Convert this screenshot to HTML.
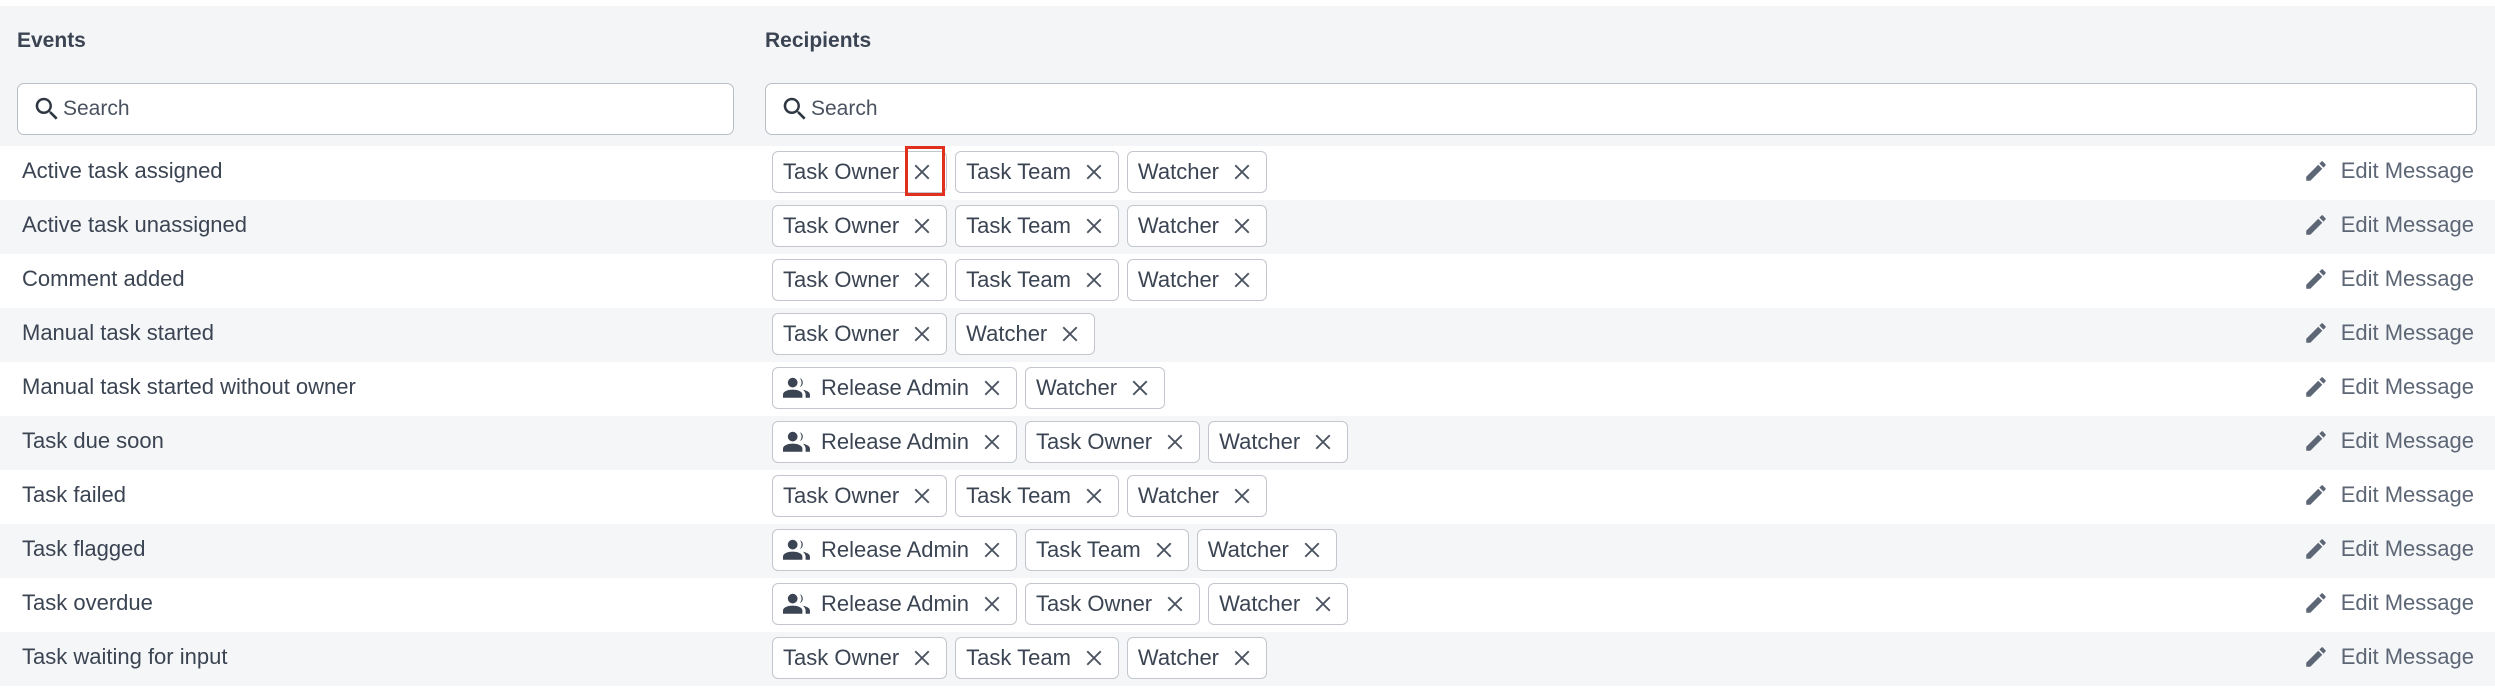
<!DOCTYPE html>
<html><head><meta charset="utf-8">
<style>
*{box-sizing:border-box;margin:0;padding:0}
body{width:2495px;height:690px;background:#fff;font-family:"Liberation Sans",sans-serif;color:#3b4452;position:relative;overflow:hidden}
.hdr{position:absolute;left:0;top:6px;width:2495px;height:140px;background:#f4f5f7}
.h{position:absolute;top:23px;font-weight:bold;font-size:21px;color:#3b4452}
.search{position:absolute;top:83px;height:52px;background:#fff;border:1.5px solid #b9bec6;border-radius:7px;display:flex;align-items:center;padding-left:14px;font-size:21px;color:#4a5260}
.search svg{margin-right:1px}
.row{position:absolute;left:0;width:2495px;height:54px}
.row.g{background:#f5f6f8}
.ev{position:absolute;left:22px;top:-2px;line-height:54px;font-size:22px}
.chips{position:absolute;left:772px;top:5px;display:flex;gap:8px}
.chip{height:42px;border:1.5px solid #c3c7cd;border-radius:6px;background:#fff;display:flex;align-items:center;padding:0 15px 0 10px;font-size:22px;color:#3b4452;white-space:nowrap}
.chip .x{margin-left:14px;width:18px;height:18px}
.chip .pp{margin-right:10px}
.edit{position:absolute;right:21px;top:-2px;line-height:54px;font-size:22px;color:#5c6675;display:flex;align-items:center}
.edit svg{margin-right:12px}
.red{position:absolute;left:905px;top:146px;width:40px;height:50px;border:3px solid #e0301e}
</style></head><body>
<div class="hdr">
<div class="h" style="left:17px">Events</div>
<div class="h" style="left:765px">Recipients</div>
<div class="search" style="left:17px;width:717px;top:77px"><svg width="30" height="30" viewBox="0 0 24 24"><path fill="#2f3742" d="M15.5 14h-.8l-.3-.3A6.5 6.5 0 1 0 9.5 16a6.5 6.5 0 0 0 4.2-1.6l.3.3v.8l5 5 1.5-1.5-5-5zm-6 0A4.5 4.5 0 1 1 14 9.5 4.5 4.5 0 0 1 9.5 14z"/></svg>Search</div>
<div class="search" style="left:765px;width:1712px;top:77px"><svg width="30" height="30" viewBox="0 0 24 24"><path fill="#2f3742" d="M15.5 14h-.8l-.3-.3A6.5 6.5 0 1 0 9.5 16a6.5 6.5 0 0 0 4.2-1.6l.3.3v.8l5 5 1.5-1.5-5-5zm-6 0A4.5 4.5 0 1 1 14 9.5 4.5 4.5 0 0 1 9.5 14z"/></svg>Search</div>
</div>
<div id="rows"></div>
<script>
var X='<svg class="x" viewBox="0 0 16 16"><path d="M2 2L14 14M14 2L2 14" stroke="#4a5260" stroke-width="1.7"/></svg>';
var P='<svg class="pp" width="28" height="24" viewBox="0 0 26 20"><circle cx="9" cy="5" r="4.5" fill="#3b4452"/><path d="M0 19v-3c0-3 5-4.5 9-4.5s9 1.5 9 4.5v3z" fill="#3b4452"/><path d="M15.5 .8a4.5 4.5 0 0 1 0 8.4A6 6 0 0 0 15.5 .8z" fill="#3b4452"/><path d="M18.5 11.6c3 .6 6.5 2 6.5 4.4v3h-4v-3c0-1.8-1.2-3.2-2.5-4.4z" fill="#3b4452"/></svg>';
var E='<svg width="26" height="26" viewBox="0 0 24 24"><path fill="#5c6675" d="M3 17.25V21h3.75L17.81 9.94l-3.75-3.75L3 17.25zM20.71 7.04a1 1 0 0 0 0-1.41l-2.34-2.34a1 1 0 0 0-1.41 0l-1.83 1.83 3.75 3.75 1.83-1.83z"/></svg>';
var d=[["Active task assigned",["Task Owner","Task Team","Watcher"]],
["Active task unassigned",["Task Owner","Task Team","Watcher"]],
["Comment added",["Task Owner","Task Team","Watcher"]],
["Manual task started",["Task Owner","Watcher"]],
["Manual task started without owner",["*Release Admin","Watcher"]],
["Task due soon",["*Release Admin","Task Owner","Watcher"]],
["Task failed",["Task Owner","Task Team","Watcher"]],
["Task flagged",["*Release Admin","Task Team","Watcher"]],
["Task overdue",["*Release Admin","Task Owner","Watcher"]],
["Task waiting for input",["Task Owner","Task Team","Watcher"]]];
var h='';
d.forEach(function(r,i){
h+='<div class="row'+(i%2?' g':'')+'" style="top:'+(146+i*54)+'px"><div class="ev">'+r[0]+'</div><div class="chips">';
r[1].forEach(function(c){var p=c[0]=='*';h+='<div class="chip">'+(p?P:'')+(p?c.slice(1):c)+X+'</div>';});
h+='</div><div class="edit">'+E+'Edit Message</div></div>';
});
h+='<div class="red"></div>';
document.getElementById('rows').innerHTML=h;
</script>
</body></html>
